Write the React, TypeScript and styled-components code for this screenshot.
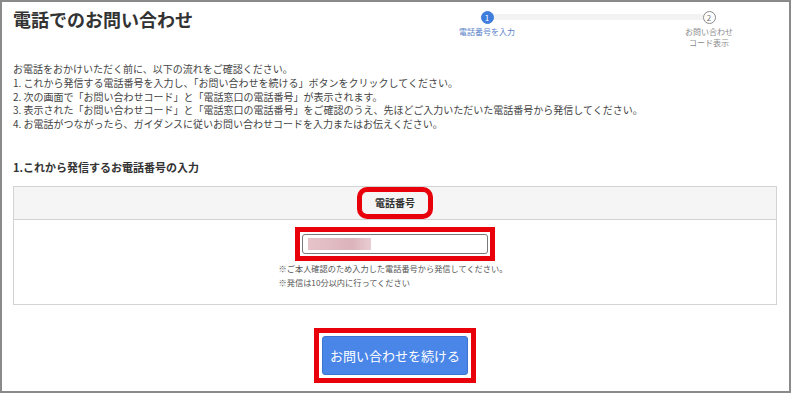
import styled, { createGlobalStyle } from 'styled-components'

const GlobalStyle = createGlobalStyle`
  html, body {
    margin: 0;
    padding: 0;
    background: #ffffff;
  }
  body {
    font-family: "Noto Sans CJK JP", "Noto Sans", "Liberation Sans", sans-serif;
    color: #333333;
  }
`

const Frame = styled.div`
  box-sizing: border-box;
  width: 791px;
  height: 393px;
  border: 2px solid #8a8a8a;
  padding: 0 12px 0 11px;
  overflow: hidden;
`

const Header = styled.div`
  display: flex;
  align-items: flex-start;
  height: 60px;
`

const Title = styled.h1`
  margin: 4px 0 0 0;
  font-size: 18px;
  line-height: 26px;
  font-weight: 700;
  color: #333333;
`

const Stepper = styled.div`
  display: flex;
  align-items: flex-start;
  margin: 9px 28px 0 auto;
`

const Step = styled.div`
  width: 80px;
  display: flex;
  flex-direction: column;
  align-items: center;
  position: relative;
  z-index: 1;
`

const Circle = styled.div<{ $active?: boolean }>`
  box-sizing: border-box;
  width: 13px;
  height: 13px;
  border-radius: 50%;
  display: flex;
  align-items: center;
  justify-content: center;
  font-size: 8px;
  line-height: 1;
  background: ${p => (p.$active ? '#3f7ddd' : '#ffffff')};
  color: ${p => (p.$active ? '#ffffff' : '#777777')};
  border: 1px solid ${p => (p.$active ? '#3f7ddd' : '#8a8a8a')};
`

const StepLabel = styled.div<{ $active?: boolean }>`
  margin-top: 2px;
  font-size: 8px;
  line-height: 11px;
  text-align: center;
  color: ${p => (p.$active ? '#5b82c9' : '#8a8a8a')};
`

const Connector = styled.div`
  width: 210px;
  height: 6px;
  margin: 3px -34px 0;
  background: #f3f3f3;
`

const Intro = styled.div`
  font-size: 10px;
  line-height: 13.8px;
  color: #444444;
`

const SectionTitle = styled.h2`
  margin: 28px 0 0 0;
  font-size: 11px;
  line-height: 16px;
  font-weight: 700;
  color: #333333;
`

const Table = styled.div`
  margin-top: 11px;
  border: 1px solid #d3d3d3;
`

const TableHead = styled.div`
  height: 32px;
  display: flex;
  align-items: center;
  justify-content: center;
  background: #f5f5f5;
  border-bottom: 1px solid #d3d3d3;
`

const Mark = styled.div<{ $radius?: number; $gap?: number }>`
  box-sizing: border-box;
  display: inline-flex;
  align-items: center;
  justify-content: center;
  border: 5px solid #e8000b;
  border-radius: ${p => p.$radius ?? 0}px;
  padding: ${p => p.$gap ?? 2}px;
`

const HeadMark = styled(Mark)`
  height: 32px;
  padding: 0 13px;
`

const HeadText = styled.span`
  font-size: 10px;
  font-weight: 700;
  color: #333333;
`

const TableBody = styled.div`
  display: flex;
  flex-direction: column;
  align-items: center;
  padding: 7px 0 16px;
`

const PhoneInput = styled.input`
  box-sizing: border-box;
  width: 186px;
  height: 20px;
  border: 1px solid #7a7a7a;
  border-radius: 3px;
  padding: 0;
  background-color: #ffffff;
  background-image: linear-gradient(90deg, #e6c4ca, #dcb4bb 70%, #e8cdd2);
  background-repeat: no-repeat;
  background-position: 5px 3px;
  background-size: 63px 12px;
  outline: none;
`

const Notes = styled.div`
  margin-top: 1px;
  font-size: 8.2px;
  line-height: 12px;
  color: #555555;
  text-align: left;
  margin-left: -4px;
`

const Note = styled.p<{ $space?: number }>`
  margin: ${p => p.$space ?? 0}px 0 0 0;
`

const Actions = styled.div`
  display: flex;
  justify-content: center;
  margin-top: 23px;
`

const SubmitButton = styled.button`
  box-sizing: border-box;
  width: 146px;
  height: 39px;
  border: 1px solid #3d74cf;
  border-radius: 3px;
  background: #4a86e8;
  color: #ffffff;
  font-family: "Noto Sans CJK JP", "Noto Sans", sans-serif;
  font-size: 13px;
  line-height: 1;
  cursor: pointer;
`

const introLines = [
  'お電話をおかけいただく前に、以下の流れをご確認ください。',
  '1. これから発信する電話番号を入力し、「お問い合わせを続ける」ボタンをクリックしてください。',
  '2. 次の画面で「お問い合わせコード」と「電話窓口の電話番号」が表示されます。',
  '3. 表示された「お問い合わせコード」と「電話窓口の電話番号」をご確認のうえ、先ほどご入力いただいた電話番号から発信してください。',
  '4. お電話がつながったら、ガイダンスに従いお問い合わせコードを入力またはお伝えください。',
]

export default function App() {
  return (
    <>
      <GlobalStyle />
      <Frame>
        <Header>
          <Title>電話でのお問い合わせ</Title>
          <Stepper>
            <Step>
              <Circle $active>1</Circle>
              <StepLabel $active>電話番号を入力</StepLabel>
            </Step>
            <Connector />
            <Step>
              <Circle>2</Circle>
              <StepLabel>
                お問い合わせ
                <br />
                コード表示
              </StepLabel>
            </Step>
          </Stepper>
        </Header>

        <Intro>
          {introLines.map(line => (
            <div key={line}>{line}</div>
          ))}
        </Intro>

        <SectionTitle>1.これから発信するお電話番号の入力</SectionTitle>

        <Table>
          <TableHead>
            <HeadMark $radius={10}>
              <HeadText>電話番号</HeadText>
            </HeadMark>
          </TableHead>
          <TableBody>
            <Mark $gap={2}>
              <PhoneInput type="tel" aria-label="電話番号" />
            </Mark>
            <Notes>
              <Note>※ご本人確認のため入力した電話番号から発信してください。</Note>
              <Note $space={2}>※発信は10分以内に行ってください</Note>
            </Notes>
          </TableBody>
        </Table>

        <Actions>
          <Mark $gap={3}>
            <SubmitButton type="button">お問い合わせを続ける</SubmitButton>
          </Mark>
        </Actions>
      </Frame>
    </>
  )
}
